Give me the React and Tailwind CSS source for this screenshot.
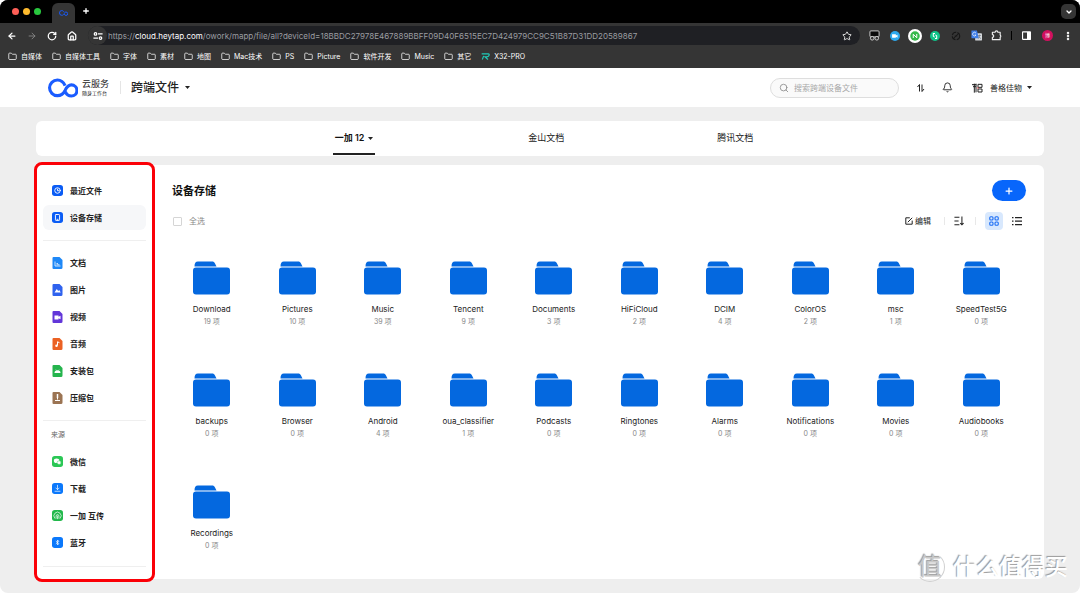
import React from 'react'
import {
  ArrowLeft,
  ArrowRight,
  Bell,
  ChevronDown,
  EllipsisVertical,
  Folder,
  House,
  Plus,
  RotateCw,
  Search,
  Star,
} from 'lucide-react'

const bookmarks = ['自媒体', '自媒体工具', '字体', '素材', '地图', 'Mac技术', 'PS', 'Picture', '软件开发', 'Music', '其它']

const folders = [
  ['Download', 19],
  ['Pictures', 10],
  ['Music', 39],
  ['Tencent', 9],
  ['Documents', 3],
  ['HiFiCloud', 2],
  ['DCIM', 4],
  ['ColorOS', 2],
  ['msc', 1],
  ['SpeedTest5G', 0],
  ['backups', 0],
  ['Browser', 0],
  ['Android', 4],
  ['oua_classifier', 1],
  ['Podcasts', 0],
  ['Ringtones', 0],
  ['Alarms', 0],
  ['Notifications', 0],
  ['Movies', 0],
  ['Audiobooks', 0],
  ['Recordings', 0],
]

/* Sidebar icons */
const Tile = ({ color, children }) => (
  <svg viewBox="0 0 24 24" className="size-[11px] shrink-0" fill="none" stroke="#fff" strokeWidth="2" strokeLinecap="round" strokeLinejoin="round">
    <rect width="24" height="24" rx="6" fill={color} stroke="none" />
    {children}
  </svg>
)

const Doc = ({ color, children }) => (
  <svg viewBox="0 0 24 24" className="size-3 -mr-px shrink-0" fill="none" stroke="#fff" strokeWidth="2">
    <path d="M3 0h12l6 6v15a3 3 0 0 1-3 3H3a2 2 0 0 1-2-2V2a2 2 0 0 1 2-2z" fill={color} stroke="none" />
    {children}
  </svg>
)

const general = [
  {
    name: '最近文件',
    icon: <Tile color="#0a5cf5"><circle cx="12" cy="12" r="6" /><path d="M12 9v3.500h2.500" /></Tile>,
  },
  {
    name: '设备存储',
    active: true,
    icon: <Tile color="#0a5cf5"><rect x="7.500" y="5.500" width="9" height="13" rx="1.500" /><path d="M11 16h2" /></Tile>,
  },
]

const types = [
  { name: '文档', icon: <Doc color="#1e88f7"><path d="M6 9v9h11M9 13h3M9 15.500h6" strokeWidth="1.500" /></Doc> },
  { name: '图片', icon: <Doc color="#2f62ee"><path d="M5 17l4.500-7 3 4 2-2 3 5z" fill="#fff" stroke="none" /></Doc> },
  { name: '视频', icon: <Doc color="#6236d9"><path d="M5 9h8v2.500l4-2v7l-4-2V17H5z" fill="#fff" stroke="none" /></Doc> },
  { name: '音频', icon: <Doc color="#eb6123"><circle cx="9" cy="15.500" r="2.500" fill="#fff" stroke="none" /><path d="M11 15V7.500l4 2" /></Doc> },
  { name: '安装包', icon: <Doc color="#25b44d"><path d="M5 16a6 5.500 0 0 1 12 0z" fill="#fff" stroke="none" /><path d="M7.500 9l1.500 2M14.500 9L13 11" strokeWidth="1" /></Doc> },
  { name: '压缩包', icon: <Doc color="#9b7453"><path d="M11 4v8" strokeWidth="3" /><path d="M6 17h10M11 12v3" /></Doc> },
]

const sources = [
  {
    name: '微信',
    icon: (
      <Tile color="#2bc755">
        <ellipse cx="10" cy="10.500" rx="6" ry="5" fill="#fff" stroke="none" />
        <ellipse cx="15.500" cy="14.500" rx="4.500" ry="4" fill="#fff" stroke="#2bc755" strokeWidth="1" />
      </Tile>
    ),
  },
  { name: '下载', icon: <Tile color="#0b78fb"><path d="M12 5v9M8.500 11l3.500 3.500 3.500-3.500M6.500 18h11" strokeWidth="1.500" /></Tile> },
  {
    name: '一加 互传',
    icon: (
      <Tile color="#22b84b">
        <path d="M6 18a8 8 0 1 1 12 0M9 18v-5a3 3 0 0 1 6 0v5M12 13v6" strokeWidth="1.500" />
      </Tile>
    ),
  },
  { name: '蓝牙', icon: <Tile color="#0b78fb"><path d="M9 9.500l6 5-3 3v-11l3 3-6 5" strokeWidth="1.500" /></Tile> },
]

const Logo = ({ className }) => (
  <svg viewBox="0 0 86 56" className={className} fill="none" stroke="#1a5cff" strokeWidth="9">
    <path d="M49 21C44 10 37 5 27 5a22 22 0 0 0 0 45c12 0 18-7 22-15 4-9 9-16 18-16a16 16 0 0 1 0 32c-8 0-14-5-17-12" />
  </svg>
)

const Caret = () => (
  <svg viewBox="0 0 10 6" className="h-[3px] w-[5px]" fill="#222">
    <path d="M0 0h10L5 6z" />
  </svg>
)

const FolderIcon = () => (
  <svg viewBox="0 0 37 34" className="h-[34px] w-[37px]" fill="#0468df">
    <path d="M1.500 5.500C1.500 2 2.500 0.500 5 0.500h14c1.500 0 2.200 0.500 3 2l1.500 3z" />
    <rect y="6.500" width="37" height="27" rx="3" />
  </svg>
)

/* Browser window */
const Extensions = () => (
  <div className="grid w-[143px] shrink-0 grid-cols-7 items-center justify-items-center">
    <button aria-label="Scripts">
      <svg viewBox="0 0 24 24" className="size-[11px]" fill="none" stroke="#d8d8d8" strokeWidth="2">
        <rect x="2" y="2" width="20" height="13" rx="2" fill="#0b0b0b" />
        <circle cx="7" cy="18" r="4" fill="#353535" />
        <circle cx="17" cy="18" r="4" fill="#353535" />
      </svg>
    </button>
    <button aria-label="Video">
      <svg viewBox="0 0 24 24" className="size-[10px]">
        <circle cx="12" cy="12" r="12" fill="#2ea9ee" />
        <path d="M5 8h9v3l4-2v7l-4-2v2H5z" fill="#fff" />
      </svg>
    </button>
    <button aria-label="Notes">
      <svg viewBox="0 0 28 28" className="size-[14px]" fill="none">
        <circle cx="14" cy="14" r="14" fill="#fff" />
        <circle cx="14" cy="14" r="9.500" fill="#36b94b" />
        <path d="M10.500 18v-7.500l7 7V10" stroke="#fff" strokeWidth="2" />
      </svg>
    </button>
    <button aria-label="Sync">
      <svg viewBox="0 0 24 24" className="size-[10px]" fill="none" stroke="#fff" strokeWidth="2.500">
        <circle cx="12" cy="12" r="12" fill="#10c389" stroke="none" />
        <path d="M12 6H8v6l3 3M12 18h4v-6l-3-3" />
      </svg>
    </button>
    <button aria-label="Blocker">
      <svg viewBox="0 0 24 24" className="size-[10px]" fill="none" stroke="#161616" strokeWidth="2.500">
        <circle cx="12" cy="12" r="9" strokeDasharray="12 3" />
        <path d="M6 18L18 6M9 12h6" />
      </svg>
    </button>
    <button aria-label="Translate">
      <svg viewBox="0 0 24 24" className="size-[11px]" fill="none">
        <rect x="9" y="7" width="15" height="16" rx="2" fill="#d5d8dc" />
        <path d="M1 1h12l4 17H1z" fill="#3f7fe8" />
        <path d="M11 7a4 4 0 1 0 0 4H8" stroke="#fff" strokeWidth="1.500" />
        <path d="M15 12h7M18.500 10v2c0 4-2 6-3 7M17 14c1 2 3 4 5 5" stroke="#5b6470" strokeWidth="1.200" />
      </svg>
    </button>
    <button aria-label="Extensions">
      <svg viewBox="0 0 24 24" className="size-[11px]" fill="none" stroke="#f1f1f1" strokeWidth="2.500" strokeLinejoin="round">
        <path d="M3 5h6a3 3 0 0 1 6 0h5v6a3 3 0 0 1 0 5v5H3v-5a3 3 0 0 0 0-6z" />
      </svg>
    </button>
  </div>
)

const Browser = () => (
  <div className="bg-[#353535] text-white">
    <div className="flex h-[23px] items-end bg-black pr-1 pl-3">
      <div className="flex h-full items-center gap-1">
        <span className="size-[7px] rounded-full bg-[#fe5f57]" />
        <span className="size-[7px] rounded-full bg-[#febb2e]" />
        <span className="size-[7px] rounded-full bg-[#29c83f]" />
      </div>
      <div className="ml-[11px] flex h-5 w-[23px] items-center justify-center rounded-t-md bg-[#353535]">
        <Logo className="h-[6px] w-[9px]" />
      </div>
      <button aria-label="New tab" className="mb-2 ml-[7px]">
        <Plus className="size-2" strokeWidth={4} />
      </button>
      <button aria-label="Search tabs" className="mb-1 ml-auto flex size-[15px] items-center justify-center rounded-[5px] bg-[#353535]">
        <ChevronDown className="size-2" strokeWidth={4} />
      </button>
    </div>

    <div className="flex h-[25px] items-center pr-[7px] pl-[7px]">
      <div className="flex items-center gap-[10px]">
        <button aria-label="Back"><ArrowLeft className="size-[10px]" strokeWidth={3} /></button>
        <button aria-label="Forward"><ArrowRight className="size-[10px] text-[#8d8d8d]" strokeWidth={2} /></button>
        <button aria-label="Reload"><RotateCw className="size-[10px]" strokeWidth={3} /></button>
        <button aria-label="Home"><House className="size-[10px]" strokeWidth={3} /></button>
      </div>
      <div className="ml-[11px] flex h-[19px] min-w-0 flex-1 items-center rounded-full bg-[#1f2024] pr-2">
        <span className="flex size-[19px] shrink-0 items-center justify-center rounded-full bg-[#353535]">
          <svg viewBox="0 0 24 24" className="size-[10px]" fill="none" stroke="#fff" strokeWidth="3">
            <circle cx="6" cy="7" r="3" />
            <path d="M12 7h11M1 17h11" />
            <circle cx="18" cy="17" r="3" />
          </svg>
        </span>
        <p className="ml-[1px] flex-1 truncate text-[8px] leading-4 text-[#9b9da1]">
          https://<span className="text-white">cloud.heytap.com</span>/owork/mapp/file/all?deviceId=18BBDC27978E467889BBFF09D40F6515EC7D424979CC9C51B87D31DD20589867
        </p>
        <button aria-label="Bookmark"><Star className="size-[10px]" strokeWidth={2} /></button>
      </div>
      <div className="ml-1 flex items-center">
        <Extensions />
        <span className="ml-[4px] h-[9px] w-px bg-black" />
        <button aria-label="Side panel" className="ml-[10px]">
          <svg viewBox="0 0 18 18" className="size-[9px]" fill="none" stroke="#fff" strokeWidth="2.500">
            <rect x="1" y="1.500" width="16" height="15" rx="1" />
            <path d="M10 2h7v14h-7z" fill="#fff" stroke="none" />
          </svg>
        </button>
        <button aria-label="Profile" className="ml-[11px] size-[11px] rounded-full bg-[#d0105e] text-[5px] leading-[11px]">博</button>
        <button aria-label="Menu" className="ml-[10px]"><EllipsisVertical className="size-[10px]" strokeWidth={4} /></button>
      </div>
    </div>

    <nav className="flex h-5 items-center gap-[10px] px-2 pb-[3px] text-[7px] leading-3">
      {bookmarks.map((name) => (
        <a key={name} href="#" className="flex items-center gap-1 whitespace-nowrap">
          <Folder className="size-[9px]" strokeWidth={2} />
          {name}
        </a>
      ))}
      <a href="#" className="flex items-center gap-1 whitespace-nowrap">
        <svg viewBox="0 0 27 20" className="h-[7px] w-[9px]" fill="none" stroke="#21c9b6" strokeWidth="3.500">
          <path d="M2 2h20q4 1 2 5t-7 4h-5l9 8M8 8L4 19" />
        </svg>
        X32-PRO
      </a>
    </nav>
  </div>
)

const Header = () => (
  <header className="flex h-[39px] items-center bg-white px-12">
    <a href="#" className="flex items-center gap-1">
      <Logo className="h-5 w-[30px]" />
      <span className="flex flex-col text-[#222]">
        <span className="text-[9px] leading-[11px]">云服务</span>
        <span className="text-[5px] leading-[9px]">随身工作台</span>
      </span>
    </a>
    <span className="ml-[11px] h-[13px] w-px bg-[#e5e5e5]" />
    <button className="ml-[10px] flex items-center gap-[6px] text-[12px] leading-4 font-medium">
      跨端文件
      <Caret />
    </button>
    <label className="ml-auto flex h-5 w-[129px] items-center gap-[5px] rounded-full border border-[#dedede] bg-[#fafafa] pl-2">
      <Search className="size-[10px] shrink-0 text-[#8a8a8a]" strokeWidth={2} />
      <input
        type="text"
        aria-label="搜索跨端设备文件"
        placeholder="搜索跨端设备文件"
        className="w-full min-w-0 bg-transparent text-[8px] leading-3 outline-none placeholder:text-[#a8a8a8]"
      />
    </label>
    <button aria-label="传输列表" className="ml-[17px]">
      <svg viewBox="0 0 20 20" className="size-[10px]" fill="none" stroke="#222" strokeWidth="2">
        <path d="M3 8l4-5v14M12 3v14l4-5" />
      </svg>
    </button>
    <button aria-label="通知" className="ml-4"><Bell className="size-[11px]" strokeWidth={2} /></button>
    <button className="ml-[19px] flex items-center text-[8px] leading-3">
      <svg viewBox="0 0 33 30" className="h-[10px] w-[11px]" fill="none" stroke="#222" strokeWidth="3">
        <path d="M0 5h13M3 11h9M7 2v27M12 2v26" />
        <path d="M18 4h12v9H18zM18 18h12v9H18z" />
        <path d="M15 15h5" stroke="#e5484d" />
      </svg>
      <span className="mr-[5px] ml-[7px]">善格佳物</span>
      <Caret />
    </button>
  </header>
)

const Tabs = () => (
  <nav className="mt-[14px] flex h-[35px] justify-center gap-[153px] rounded-md bg-white pb-px pl-[6px] text-[9px] text-[#222]">
    <button className="flex items-center gap-1 border-y-2 border-t-transparent border-b-[#222] px-[2px] font-semibold text-[#111]">
      一加 12
      <Caret />
    </button>
    <button>金山文档</button>
    <button>腾讯文档</button>
  </nav>
)

const Menu = ({ items }) => (
  <ul className="flex flex-col gap-[2px]">
    {items.map((item) => (
      <li key={item.name}>
        <a
          href="#"
          className={
            item.active
              ? 'flex h-[25px] items-center gap-[7px] rounded-md bg-[#f6f7f9] pl-[9px]'
              : 'flex h-[25px] items-center gap-[7px] pl-[9px]'
          }
        >
          {item.icon}
          {item.name}
        </a>
      </li>
    ))}
  </ul>
)

const Sidebar = () => (
  <aside className="relative w-[119px] shrink-0 pt-[13px] pr-[9px] pb-3 pl-[7px] text-[8px] font-semibold text-[#222]">
    <Menu items={general} />
    <hr className="mt-[10px] mb-[9px] border-[#efefef]" />
    <Menu items={types} />
    <hr className="mt-[10px] mb-2 border-[#efefef]" />
    <h2 className="mb-2 pl-2 text-[7px] leading-3 font-normal text-[#666]">来源</h2>
    <Menu items={sources} />
    <hr className="mt-[11px] border-[#efefef]" />
    {/* highlight frame round the menu */}
    <div className="pointer-events-none absolute -inset-y-[3px] right-0 -left-[2px] rounded-lg border-[3px] border-[#fb0007]" />
  </aside>
)

const Toolbar = () => (
  <div className="mt-[11px] flex h-[18px] items-center pr-[22px] pl-[18px] text-[8px] leading-3">
    <label className="flex items-center gap-[7px] text-[#888]">
      <input type="checkbox" className="size-[9px] appearance-none rounded-[1px] border border-[#d5d5d5] bg-white" />
      全选
    </label>
    <button className="ml-auto flex items-center gap-[2px]">
      <svg viewBox="0 0 20 20" className="size-[8px]" fill="none" stroke="#222" strokeWidth="2.500">
        <path d="M12 2H2v16h16V9M7 13L18 2" />
      </svg>
      编辑
    </button>
    <span className="ml-[13px] h-2 w-px bg-[#e8e8e8]" />
    <button aria-label="排序" className="ml-[9px]">
      <svg viewBox="0 0 24 24" className="size-[10px]" fill="none" stroke="#222" strokeWidth="2.500">
        <path d="M1 3h12M1 12h10M1 21h12M19 1v20M23 17l-4 4-4-4" />
      </svg>
    </button>
    <span className="ml-[11px] h-2 w-px bg-[#e8e8e8]" />
    <button aria-label="网格" className="ml-[9px] flex size-[18px] items-center justify-center rounded bg-[#d8e8fd]">
      <svg viewBox="0 0 20 20" className="size-[10px]" fill="none" stroke="#1a6df5" strokeWidth="2.200">
        <rect x="1.500" y="1.500" width="6.500" height="6.500" rx="2" />
        <rect x="12" y="1.500" width="6.500" height="6.500" rx="2" />
        <rect x="1.500" y="12" width="6.500" height="6.500" rx="2" />
        <rect x="12" y="12" width="6.500" height="6.500" rx="2" />
      </svg>
    </button>
    <button aria-label="列表" className="ml-[9px]">
      <svg viewBox="0 0 20 20" className="size-[10px]" fill="none" stroke="#222" strokeWidth="2.500">
        <path d="M0 3h3M6 3h14M0 10h3M6 10h14M0 17h3M6 17h14" />
      </svg>
    </button>
  </div>
)

const Watermark = () => (
  <div className="pointer-events-none absolute right-3 bottom-[10px] flex items-center gap-2 text-white [text-shadow:-1px_-1px_1px_#999]">
    <span className="flex size-[30px] items-center justify-center rounded-full border border-white border-r-[#d0d0d0] border-b-[#d0d0d0] text-[24px] leading-none text-[#c8c8c8]">值</span>
    <span className="text-[23px] leading-8 font-medium">什么值得买</span>
  </div>
)

export default function App() {
  return (
    <div className="relative min-h-screen overflow-hidden rounded-lg bg-[#eeeeee] font-['Inter','Noto_Sans_CJK_SC',sans-serif] text-[#222]">
      <Browser />
      <Header />
      <div className="px-9 pb-[14px]">
        <Tabs />
        <div className="mt-[9px] flex rounded-md bg-white">
          <Sidebar />
          <main className="min-w-0 flex-1 pt-[15px]">
            <div className="flex items-center justify-between pr-[18px] pl-[17px]">
              <h1 className="text-[11px] leading-4 font-semibold text-[#111]">设备存储</h1>
              <button aria-label="新建" className="flex h-[21px] w-[34px] items-center justify-center rounded-full bg-[#0866fb] text-white">
                <Plus className="size-[10px]" strokeWidth={3} />
              </button>
            </div>
            <Toolbar />
            <ul className="mt-[31px] grid grid-cols-10 gap-y-[45px] pr-5 pl-[14px]">
              {folders.map(([name, count]) => (
                <li key={name} className="flex flex-col items-center">
                  <FolderIcon />
                  <span className="mt-2 text-[8px] leading-[13px]">{name}</span>
                  <span className="text-[7px] leading-3 text-[#888]">{count} 项</span>
                </li>
              ))}
            </ul>
          </main>
        </div>
      </div>
      <Watermark />
    </div>
  )
}
